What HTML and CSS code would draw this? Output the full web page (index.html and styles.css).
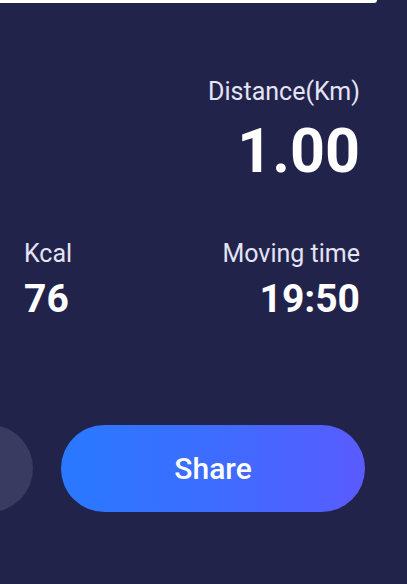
FILE: index.html
```html
<!DOCTYPE html>
<html lang="en">
<head>
    <meta charset="UTF-8">
    <meta name="viewport" content="width=device-width, initial-scale=1.0">
    <title>Workout summary</title>
    <link rel="stylesheet" href="styles.css">
</head>
<body>
    <!-- card above, scrolled out of view -->
    <div class="top-card"></div>

    <div class="stats">
        <div class="stat stat-main">
            <div class="stat-label">Distance(Km)</div>
            <div class="stat-value big">1.00</div>
        </div>
        <div class="stat-row">
            <div class="stat">
                <div class="stat-label">Kcal</div>
                <div class="stat-value">76</div>
            </div>
            <div class="stat stat-right">
                <div class="stat-label">Moving time</div>
                <div class="stat-value">19:50</div>
            </div>
        </div>
    </div>

    <div class="actions">
        <div class="round-btn"></div>
        <button class="share-btn">Share</button>
    </div>
</body>
</html>
```

FILE: styles.css
```css
body {
    margin: 0;
    height: 584px;
    overflow: hidden;
    background-color: #22234b;
    font-family: Roboto, "Noto Sans", sans-serif;
    color: #fff;
}
.top-card {
    width: 377px;
    height: 3px;
    background-color: #fff;
    border-bottom-right-radius: 14px;
}
.stats {
    padding: 74px 47px 0 24px;
}
.stat-main {
    text-align: right;
}
.stat-label {
    font-size: 25px;
    color: #e4e4f4;
    line-height: 30px;
}
.stat-value {
    font-size: 39px;
    font-weight: 700;
    line-height: 46px;
    margin-top: 7px;
}
.stat-value.big {
    font-size: 61px;
    line-height: 76px;
    margin-top: 6px;
}
.stat-row {
    display: flex;
    justify-content: space-between;
    margin-top: 50px;
}
.stat-right {
    text-align: right;
}
.actions {
    display: flex;
    align-items: center;
    margin-top: 103px;
    gap: 28px;
}
.round-btn {
    width: 87px;
    height: 87px;
    border-radius: 50%;
    background-color: #3a3b61;
    margin-left: -54px;
    flex-shrink: 0;
}
.share-btn {
    width: 304px;
    height: 87px;
    border: none;
    border-radius: 44px;
    background: linear-gradient(90deg, #2979ff, #3d6cff 50%, #5a5bff);
    color: #fff;
    font-family: Roboto, "Noto Sans", sans-serif;
    font-size: 30px;
    font-weight: 500;
    padding: 0;
}
```
